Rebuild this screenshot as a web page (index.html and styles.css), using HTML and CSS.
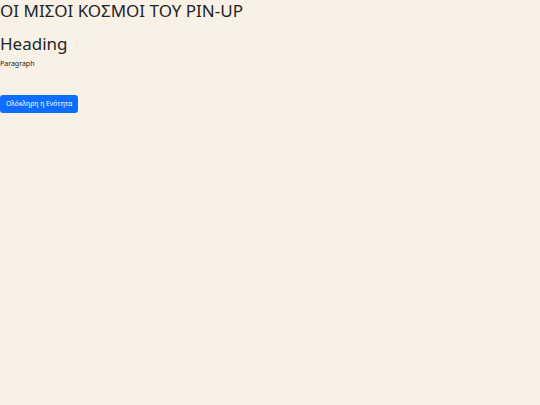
FILE: index.html
```html
<!DOCTYPE html>
<html lang="el">
<head>
<meta charset="utf-8">
<link rel="stylesheet" href="styles.css">
</head>
<body>
<h1 class="title">ΟΙ ΜΙΣΟΙ ΚΟΣΜΟΙ ΤΟΥ PIN-UP</h1>
<h2 class="heading">Heading</h2>
<p class="para">Paragraph</p>
<button class="btn">Ολόκληρη η Ενότητα</button>
</body>
</html>
```
FILE: styles.css
```css
html, body {
  margin: 0;
  padding: 0;
  background: #f9f0e6;
  font-family: "Noto Sans", sans-serif;
  color: #212529;
}
.title {
  margin: 0;
  font-size: 17px;
  font-weight: 400;
  line-height: 22px;
}
.heading {
  margin: 10px 0 0;
  font-size: 17px;
  font-weight: 400;
  line-height: 24px;
}
.para {
  margin: 3px 0 0;
  font-size: 7px;
  line-height: 10px;
}
.btn {
  display: block;
  margin-top: 26px;
  background: #0d6efd;
  color: #fff;
  border: 0;
  border-radius: 3px;
  font-family: "Noto Sans", sans-serif;
  font-size: 6.8px;
  line-height: 10px;
  padding: 4px 6px;
  white-space: nowrap;
}
```
